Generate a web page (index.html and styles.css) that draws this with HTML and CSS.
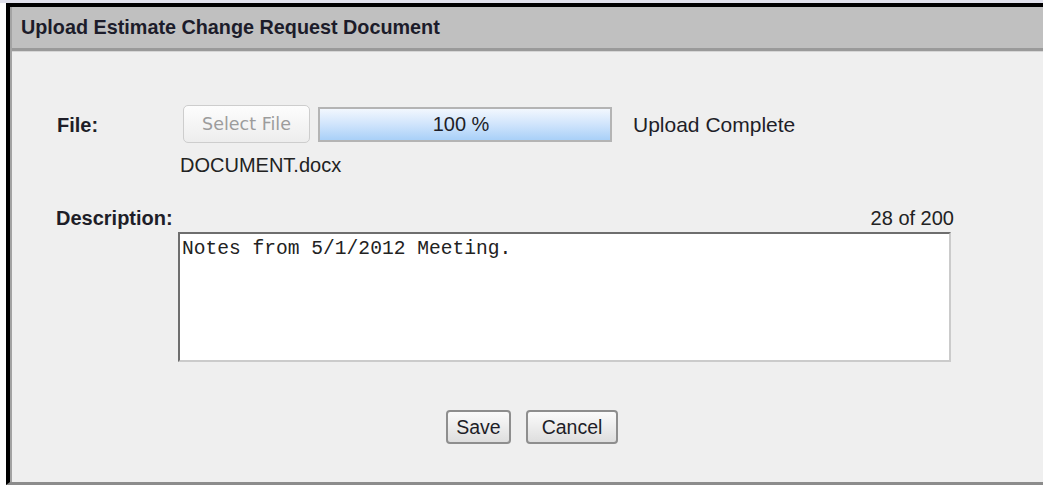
FILE: index.html
```html
<!DOCTYPE html>
<html lang="en">
<head>
<meta charset="utf-8">
<title>Upload Estimate Change Request Document</title>
<link rel="stylesheet" href="styles.css">
</head>
<body>
  <div class="dialog">
    <div class="dialog-inner">
      <div class="dialog-header">Upload Estimate Change Request Document</div>
      <div class="dialog-body">
        <div class="form">
          <div class="label file-label">File:</div>
          <div class="file-row">
            <button class="select-file" type="button" disabled>Select File</button>
            <div class="progress"><span>100 %</span></div>
            <span class="status">Upload Complete</span>
          </div>

          <div></div>
          <div class="filename">DOCUMENT.docx</div>

          <div class="label desc-label">Description:</div>
          <div class="counter">28 of 200</div>

          <div></div>
          <textarea class="description">Notes from 5/1/2012 Meeting.</textarea>
        </div>
        <div class="actions">
          <button class="btn btn-save" type="button">Save</button>
          <button class="btn btn-cancel" type="button">Cancel</button>
        </div>
      </div>
    </div>
  </div>
</body>
</html>
```
FILE: styles.css
```css
html, body {
  overflow: hidden;
}

body {
  margin: 0;
  padding: 3px 0 0 6px;
  height: 485px;
  box-sizing: border-box;
  background: linear-gradient(#e1e1ec, #e1e1ec) top left / 100% 3px no-repeat, #ffffff;
  font-family: "Liberation Sans", Arial, sans-serif;
  color: #222;
}

.dialog {
  width: 1046px;
  height: 482px;
  box-sizing: border-box;
  border-top: 4px solid #000;
  border-left: 4px solid #000;
  border-bottom: 3px solid #8c8c8c;
  background: #efefef;
}

.dialog-inner {
  height: 100%;
  border-left: 2px solid #a3a3a3;
  display: flex;
  flex-direction: column;
}

.dialog-header {
  height: 41px;
  line-height: 41px;
  padding-left: 9px;
  background: #c0c0c0;
  border-bottom: 3px solid #9a9a9a;
  font-size: 19.8px;
  font-weight: bold;
  color: #1c1c2a;
  white-space: nowrap;
}

.dialog-body {
  flex: 1;
  border-top: 1px solid #d6d6d6;
}

.form {
  display: grid;
  grid-template-columns: 121px 773px;
  padding: 53px 0 0 45px;
  font-size: 20px;
  line-height: 23px;
}

.label {
  font-weight: bold;
  color: #1e1e28;
}

.file-label {
  align-self: center;
  padding-top: 2px;
}

.file-row {
  display: flex;
  align-items: center;
  height: 38px;
}

.select-file {
  margin-left: 5px;
  width: 127px;
  height: 38px;
  border: 1px solid #cdcdcd;
  border-radius: 5px;
  background: linear-gradient(#fdfdfd, #ededed);
  font-family: "DejaVu Sans", Verdana, sans-serif;
  font-size: 17.5px;
  color: #9c9c9c;
  padding: 0;
}

.progress {
  margin-left: 8px;
  width: 294px;
  height: 35px;
  box-sizing: border-box;
  border: 2px solid #b4b4b4;
  background: linear-gradient(#f2f7fe, #d3e6fc 45%, #a9d0f8);
  display: flex;
  align-items: center;
  justify-content: center;
  padding-right: 8px;
  color: #1e1e28;
}

.status {
  margin-left: 21px;
  font-size: 21px;
  color: #1e1e28;
}

.filename {
  margin-top: 11px;
  padding-left: 2px;
}

.desc-label {
  margin-top: 30px;
  margin-left: -1px;
}

.counter {
  margin-top: 30px;
  margin-right: -3px;
  text-align: right;
}

.description {
  margin-top: 2px;
  width: 773px;
  height: 130px;
  box-sizing: border-box;
  border-style: solid;
  border-width: 2px;
  border-color: #6e6e6e #cbcbcb #cbcbcb #6e6e6e;
  background: #fff;
  padding: 4px 2px;
  font-family: "Liberation Mono", "Courier New", monospace;
  font-size: 19.6px;
  line-height: 22px;
  color: #222;
  resize: none;
  outline: none;
}

.actions {
  display: flex;
  justify-content: center;
  gap: 15px;
  margin-top: 48px;
}

.btn {
  height: 34px;
  padding: 0;
  border: 2px solid #8e8e8e;
  border-radius: 4px;
  background: linear-gradient(#fbfbfb, #dedede);
  font-family: "Liberation Sans", Arial, sans-serif;
  font-size: 19.5px;
  color: #1e1e28;
}

.btn-save {
  width: 65px;
}

.btn-cancel {
  width: 92px;
}
```
